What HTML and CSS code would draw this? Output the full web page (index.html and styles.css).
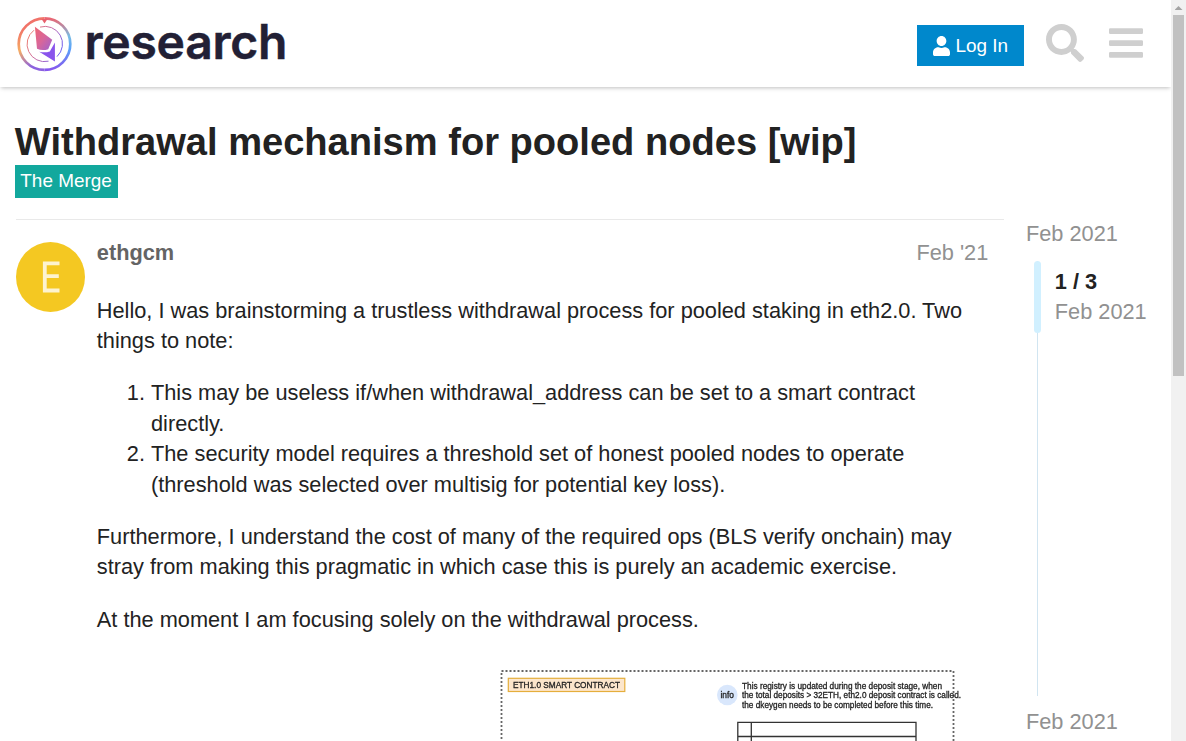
FILE: index.html
```html
<!DOCTYPE html>
<html lang="en">
<head>
<meta charset="utf-8">
<title>Withdrawal mechanism for pooled nodes [wip]</title>
<link rel="stylesheet" href="styles.css">
</head>
<body>
<div class="page">
  <header class="header">
    <svg class="logo" width="290" height="70" viewBox="0 0 290 70">
      <defs>
        <linearGradient id="ringWarm" x1="0" y1="0" x2="0.25" y2="1">
          <stop offset="0" stop-color="#ef6671"/><stop offset=".25" stop-color="#f17767"/><stop offset=".6" stop-color="#f6ad64"/><stop offset="1" stop-color="#8c62df"/>
        </linearGradient>
        <linearGradient id="ringCool" x1="0" y1="0" x2="0" y2="1">
          <stop offset="0" stop-color="#eb6471"/><stop offset=".35" stop-color="#79bce4"/><stop offset=".6" stop-color="#5aa1fa"/><stop offset="1" stop-color="#8656ed"/>
        </linearGradient>
        <linearGradient id="inner" x1="0" y1=".2" x2="1" y2=".7">
          <stop offset="0" stop-color="#f0806c"/><stop offset=".5" stop-color="#c66ba7"/><stop offset="1" stop-color="#675cf5"/>
        </linearGradient>
        <linearGradient id="gem" x1="0" y1="0" x2="1" y2="1">
          <stop offset="0" stop-color="#ef6572"/><stop offset=".5" stop-color="#d8669a"/><stop offset="1" stop-color="#9d61cf"/>
        </linearGradient>
      </defs>
      <path d="M44.500 18.300a25.800 25.800 0 0 0 0 51.600" fill="none" stroke="url(#ringWarm)" stroke-width="2.700"/>
      <path d="M44.500 18.300a25.800 25.800 0 0 1 0 51.600" fill="none" stroke="url(#ringCool)" stroke-width="2.700"/>
      <path d="M41.500 19l1 1.500 2 3 2-3 1-1.500z" fill="#e8606d"/>
      <path d="M34 30.200a17.500 17.500 0 0 0 14.500 31M40 27.100A17.500 17.500 0 0 1 57 56.600" fill="none" stroke="url(#inner)" stroke-width="1"/>
      <path d="M34.900 26.800L52.200 39.700l-4 9.500q-6 2-11.200-.4z" fill="url(#gem)"/>
      <path d="M54.900 42.500v19l-15.700-9.700q6 1.200 10.600-.4z" fill="#8954ec"/>
      <text class="logo-text" x="84.500" y="58.700" textLength="203" lengthAdjust="spacing">research</text>
    </svg>
    <nav class="actions">
      <button class="login">
        <svg width="17" height="20" viewBox="0 0 448 512" preserveAspectRatio="none"><path fill="currentColor" d="M224 256c70.700 0 128-57.300 128-128S294.700 0 224 0 96 57.300 96 128s57.300 128 128 128zm89.600 32h-16.700c-22.200 10.200-46.900 16-72.900 16s-50.600-5.800-72.900-16h-16.700C60.200 288 0 348.200 0 422.400V464c0 26.500 21.500 48 48 48h352c26.500 0 48-21.500 48-48v-41.600c0-74.200-60.200-134.400-134.400-134.400z"/></svg>
        <span>Log In</span>
      </button>
      <svg class="search" width="38" height="38" viewBox="0 0 512 512"><path fill="currentColor" d="M505 442.700L405.300 343c-4.500-4.500-10.600-7-17-7H372c27.600-35.300 44-79.700 44-128C416 93.100 322.900 0 208 0S0 93.100 0 208s93.100 208 208 208c48.300 0 92.700-16.400 128-44v16.300c0 6.400 2.500 12.500 7 17l99.700 99.700c9.400 9.400 24.600 9.400 33.900 0l28.300-28.300c9.400-9.400 9.400-24.600.1-34zM208 336c-70.700 0-128-57.200-128-128 0-70.700 57.200-128 128-128 70.700 0 128 57.200 128 128 0 70.700-57.200 128-128 128z"/></svg>
      <svg class="menu" width="34" height="39" viewBox="0 0 34 39"><path fill="currentColor" d="M1.200 4.200h31.600q1.200 0 1.200 1.200v3.300q0 1.200-1.200 1.200H1.200Q0 9.900 0 8.700V5.400q0-1.200 1.200-1.200zM1.200 16.200h31.600q1.200 0 1.200 1.200v3.300q0 1.200-1.200 1.200H1.200Q0 21.900 0 20.700v-3.300q0-1.200 1.200-1.200zM1.200 28.100h31.600q1.200 0 1.200 1.200v3.300q0 1.200-1.200 1.200H1.200Q0 33.800 0 32.600v-3.300q0-1.200 1.200-1.200z"/></svg>
    </nav>
  </header>
  <main class="main">
    <h1 class="title">Withdrawal mechanism for pooled nodes [wip]</h1>
    <a class="category">The Merge</a>
    <div class="columns">
      <article class="post">
        <div class="avatar"><svg width="69" height="70" viewBox="0 0 69 70"><ellipse cx="34.500" cy="35" rx="34.500" ry="35" fill="#f4c822"/><path d="M43.500 21.300H28.800V48.500H43.500M28.800 34.200H42.800" fill="none" stroke="#fdf3d0" stroke-width="3.800"/></svg></div>
        <div class="body">
          <div class="meta"><b class="author">ethgcm</b><span class="date">Feb '21</span></div>
          <div class="cooked">
            <p>Hello, I was brainstorming a trustless withdrawal process for pooled staking in eth2.0. Two things to note:</p>
            <ol>
              <li>This may be useless if/when withdrawal_address can be set to a smart contract directly.</li>
              <li>The security model requires a threshold set of honest pooled nodes to operate (threshold was selected over multisig for potential key loss).</li>
            </ol>
            <p>Furthermore, I understand the cost of many of the required ops (BLS verify onchain) may stray from making this pragmatic in which case this is purely an academic exercise.</p>
            <p>At the moment I am focusing solely on the withdrawal process.</p>
            <svg class="diagram" width="873" height="90" viewBox="97 657 873 90">
              <path d="M501.500 747V671H953.500V747" fill="none" stroke="#666" stroke-width="1.800" stroke-dasharray="2 2"/>
              <rect x="508.300" y="678.300" width="116.500" height="13.200" fill="#fce6cc" stroke="#e5ae3c" stroke-width="1.200"/>
              <text x="513" y="688" textLength="107" lengthAdjust="spacingAndGlyphs">ETH1.0 SMART CONTRACT</text>
              <circle cx="727.300" cy="695" r="10.300" fill="#d9e7fc"/>
              <text x="720.500" y="698" textLength="13.500" lengthAdjust="spacingAndGlyphs">info</text>
              <text x="742" y="688.500" textLength="200" lengthAdjust="spacingAndGlyphs">This registry is updated during the deposit stage, when</text>
              <text x="742" y="698.100" textLength="219" lengthAdjust="spacingAndGlyphs">the total deposits &gt; 32ETH, eth2.0 deposit contract is called.</text>
              <text x="742" y="707.700" textLength="191" lengthAdjust="spacingAndGlyphs">the dkeygen needs to be completed before this time.</text>
              <path d="M737.800 747V722.300H916V747M751.300 722.300V747M737.800 736.500H916" fill="none" stroke="#333" stroke-width="1.300"/>
            </svg>
          </div>
        </div>
      </article>
      <aside class="timeline">
        <div class="stamp">Feb 2021</div>
        <div class="track">
          <div class="handle"></div>
          <div class="position"><b>1 / 3</b><span>Feb 2021</span></div>
        </div>
        <div class="stamp">Feb 2021</div>
      </aside>
    </div>
  </main>
</div>
<div class="scrollbar"><div class="arrow"></div><div class="thumb"></div></div>
</body>
</html>
```

FILE: styles.css
```css
* { box-sizing: border-box; }
body {
  margin: 0;
  height: 741px;
  display: flex;
  overflow: hidden;
  background: #fff;
  color: #222;
  font: 21.76px/30.46px "Liberation Sans", Arial, sans-serif;
}
svg { display: block; flex: none; }
.page { width: 1171px; height: 741px; overflow: hidden; }
.header {
  height: 87px;
  display: flex;
  justify-content: space-between;
  align-items: flex-start;
  box-shadow: 0 2px 4px -1px rgba(0, 0, 0, .25);
}
.logo { overflow: visible; }
.logo-text { font: 600 48px Inter, sans-serif; fill: #222035; stroke: #222035; stroke-width: .5px; }
.actions { display: flex; padding: 24px 28px 0 0; color: #cfcfcf; }
.login {
  display: flex;
  align-items: center;
  gap: 5.5px;
  width: 107px;
  height: 41px;
  margin: 1px 22px 0 0;
  padding: 0 0 0 16px;
  border: 0;
  background: #0088cc;
  color: #fff;
  font: 18.94px "Liberation Sans", Arial, sans-serif;
  white-space: nowrap;
}
.search { margin-right: 25px; }
.main { padding: 32px 0 0 14.8px; }
.title { margin: 0; font-size: 38.1px; line-height: 46px; white-space: nowrap; }
.category {
  display: block;
  width: 103px;
  height: 33px;
  padding-left: 5.5px;
  background: #12a89d;
  color: #fff;
  font-size: 18.94px;
  line-height: 32px;
  white-space: nowrap;
}
.columns { display: flex; gap: 22.2px; margin: 21px 0 0 1px; }
.post { display: flex; width: 988px; padding-top: 18px; border-top: 1px solid #e9e9e9; }
.avatar { width: 81px; padding-top: 4px; }
.body { width: 891.5px; }
.meta { display: flex; justify-content: space-between; }
.author { color: #646464; }
.date, .stamp, .position span { color: #919191; }
.cooked { padding-top: 27.2px; }
.cooked p, .cooked ol { margin: 0 0 21.76px; }
.cooked ol { padding-left: 54.2px; }
.diagram { margin-top: -.2px; font: 8.8px "Liberation Sans", Arial, sans-serif; fill: #222; filter: blur(.35px); }
.diagram text { stroke: #222; stroke-width: .3px; }
.timeline { width: 140px; white-space: nowrap; }
.track { display: flex; height: 435px; margin: 12px 0 11px 8px; background: linear-gradient(#d1e5f1, #d1e5f1) 3px 0 / 1px 100% no-repeat; }
.handle { width: 7px; height: 72px; border-radius: 4px; background: #d1f0ff; }
.position { display: flex; flex-direction: column; padding: 6px 0 0 13.8px; line-height: 30px; }
.scrollbar { width: 15px; height: 741px; padding: 6px 2px 0; background: #f1f1f1; }
.arrow { width: 8px; height: 4px; margin-left: 1.5px; background: #a3a3a3; clip-path: polygon(50% 0, 100% 100%, 0 100%); }
.thumb { width: 11px; height: 361px; margin-top: 5px; background: #c1c1c1; }
```
